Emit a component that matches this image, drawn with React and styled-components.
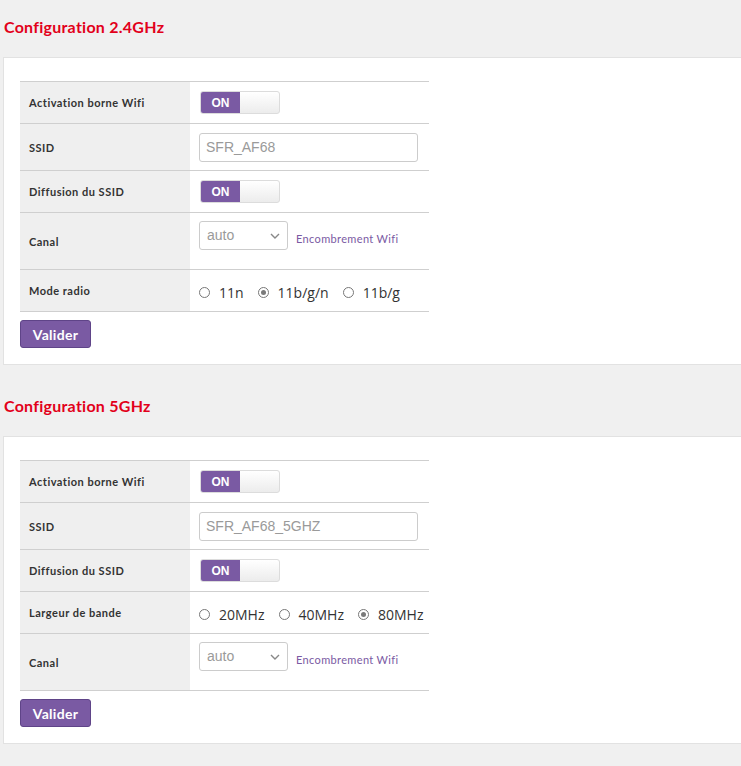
import React from "react";
import styled, { createGlobalStyle } from "styled-components";

const Global = createGlobalStyle`
  html, body { margin: 0; padding: 0; }
  body {
    background: #f0f0f0;
    font-family: Lato, "Open Sans", Arial, sans-serif;
    color: #333;
    overflow: hidden;
    width: 741px;
  }
`;

const Page = styled.div`
  display: flex;
  flex-direction: column;
`;

const Section = styled.section`
  display: flex;
  flex-direction: column;
  & + & { margin-top: 14px; }
`;

const Heading = styled.h2`
  margin: 0;
  height: 57px;
  box-sizing: border-box;
  padding: 17px 0 0 4px;
  font-size: 16px;
  line-height: 20px;
  font-weight: 700;
  letter-spacing: 0.25px;
  color: #e2001a;
`;

const Card = styled.div`
  margin-left: 3px;
  background: #fff;
  border: 1px solid #e2e2e2;
  border-right: none;
  padding: 23px 16px 16px 16px;
  display: flex;
  flex-direction: column;
  align-items: flex-start;
  gap: 8px;
`;

const Table = styled.table`
  border-collapse: collapse;
  width: 409px;
`;

const Row = styled.tr`
  border-top: 1px solid #cfcfcf;
  border-bottom: 1px solid #cfcfcf;
`;

const Label = styled.td`
  width: 170px;
  box-sizing: border-box;
  background: #efefef;
  padding: 0 0 0 9px;
  height: ${(p) => p.$h}px;
  font-size: 11px;
  font-weight: 700;
  letter-spacing: 0.5px;
  color: #333;
  vertical-align: middle;
`;

const Value = styled.td`
  padding: ${(p) => p.$pad || "0 0 0 9px"};
  vertical-align: ${(p) => p.$va || "middle"};
`;

const Toggle = styled.div`
  display: flex;
  width: 80px;
  height: 23px;
  box-sizing: border-box;
  border: 1px solid #dcdcdc;
  border-radius: 3px;
  overflow: hidden;
  background: linear-gradient(#ffffff, #ececec);
  margin-left: 1px;
`;

const ToggleOn = styled.span`
  width: 39px;
  background: #7a5aa3;
  color: #fff;
  font-family: "Liberation Sans", Arial, sans-serif;
  font-weight: 700;
  font-size: 12px;
  display: flex;
  align-items: center;
  justify-content: center;
`;

const TextInput = styled.div`
  width: 219px;
  height: 29px;
  box-sizing: border-box;
  border: 1px solid #cccccc;
  border-radius: 3px;
  padding: 0 6px;
  display: flex;
  align-items: center;
  font-family: "Liberation Sans", Arial, sans-serif;
  font-size: 14px;
  color: #9a9a9a;
`;

const ChannelLine = styled.div`
  display: flex;
  align-items: flex-end;
  gap: 8px;
`;

const Select = styled.div`
  width: 89px;
  height: 29px;
  box-sizing: border-box;
  border: 1px solid #cccccc;
  border-radius: 3px;
  padding: 0 7px 2px 7px;
  display: flex;
  align-items: center;
  justify-content: space-between;
  font-family: "Liberation Sans", Arial, sans-serif;
  font-size: 14px;
  color: #9a9a9a;
`;

const Link = styled.a`
  font-size: 11px;
  letter-spacing: 0.35px;
  color: #7a5aa3;
  text-decoration: none;
  line-height: 14px;
  margin-bottom: 4px;
`;

const Radios = styled.div`
  display: flex;
  align-items: center;
  gap: 14px;
  padding-top: 4px;
`;

const RadioItem = styled.label`
  display: flex;
  align-items: center;
  gap: 9px;
  font-family: "Open Sans", Arial, sans-serif;
  font-size: 14px;
  color: #333;
`;

const Circle = styled.span`
  width: 11px;
  height: 11px;
  box-sizing: border-box;
  border-radius: 50%;
  border: 1px solid #777;
  background: #fff;
  display: flex;
  align-items: center;
  justify-content: center;
  &::after {
    content: "";
    display: ${(p) => (p.$checked ? "block" : "none")};
    width: 5px;
    height: 5px;
    border-radius: 50%;
    background: #7a7a7a;
  }
`;

const Button = styled.button`
  width: 71px;
  height: 28px;
  border: 1px solid #5f4488;
  border-radius: 3px;
  background: #7a5aa3;
  color: #fff;
  font-family: Lato, Arial, sans-serif;
  font-weight: 700;
  font-size: 14px;
  letter-spacing: 0.3px;
  padding: 0;
  cursor: pointer;
`;

const Chevron = () => (
  <svg width="10" height="6" viewBox="0 0 10 6" style={{ marginTop: 3 }}>
    <path d="M1 1l4 4 4-4" fill="none" stroke="#888" strokeWidth="1.4" />
  </svg>
);

const SwitchOn = () => (
  <Toggle>
    <ToggleOn>ON</ToggleOn>
  </Toggle>
);

const RadioGroup = ({ options, checked }) => (
  <Radios>
    {options.map((o) => (
      <RadioItem key={o}>
        <Circle $checked={o === checked} />
        {o}
      </RadioItem>
    ))}
  </Radios>
);

const ToggleRow = ({ label }) => (
  <Row>
    <Label $h={42}>{label}</Label>
    <Value>
      <SwitchOn />
    </Value>
  </Row>
);

const SsidRow = ({ value }) => (
  <Row>
    <Label $h={47}>SSID</Label>
    <Value>
      <TextInput>{value}</TextInput>
    </Value>
  </Row>
);

const CanalRow = () => (
  <Row>
    <Label $h={57}>Canal</Label>
    <Value $va="top" $pad="8px 0 0 9px">
      <ChannelLine>
        <Select>
          auto
          <Chevron />
        </Select>
        <Link href="#">Encombrement Wifi</Link>
      </ChannelLine>
    </Value>
  </Row>
);

const RadioRow = ({ label, options, checked }) => (
  <Row>
    <Label $h={42}>{label}</Label>
    <Value>
      <RadioGroup options={options} checked={checked} />
    </Value>
  </Row>
);

export default function App() {
  return (
    <Page>
      <Global />
      <Section>
        <Heading>Configuration 2.4GHz</Heading>
        <Card>
          <Table>
            <tbody>
              <ToggleRow label="Activation borne Wifi" />
              <SsidRow value="SFR_AF68" />
              <ToggleRow label="Diffusion du SSID" />
              <CanalRow />
              <RadioRow label="Mode radio" options={["11n", "11b/g/n", "11b/g"]} checked="11b/g/n" />
            </tbody>
          </Table>
          <Button>Valider</Button>
        </Card>
      </Section>
      <Section>
        <Heading>Configuration 5GHz</Heading>
        <Card>
          <Table>
            <tbody>
              <ToggleRow label="Activation borne Wifi" />
              <SsidRow value="SFR_AF68_5GHZ" />
              <ToggleRow label="Diffusion du SSID" />
              <RadioRow label="Largeur de bande" options={["20MHz", "40MHz", "80MHz"]} checked="80MHz" />
              <CanalRow />
            </tbody>
          </Table>
          <Button>Valider</Button>
        </Card>
      </Section>
    </Page>
  );
}
